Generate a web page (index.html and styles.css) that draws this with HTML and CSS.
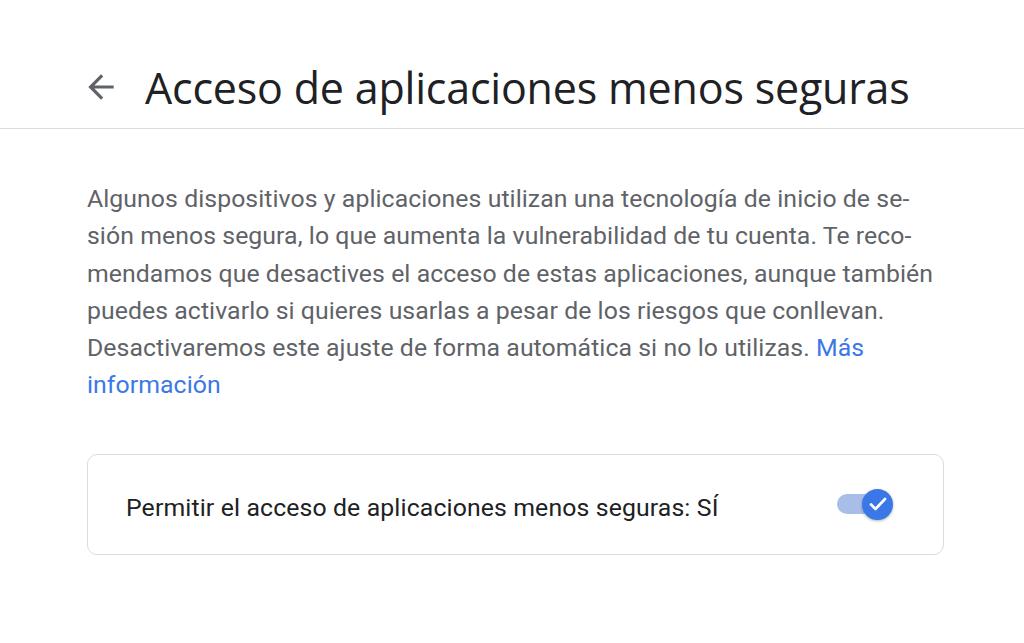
FILE: index.html
```html
<!DOCTYPE html>
<html lang="es">
<head>
    <meta charset="UTF-8">
    <meta name="viewport" content="width=device-width, initial-scale=1.0">
    <title>Acceso de aplicaciones menos seguras</title>
    <link rel="stylesheet" href="styles.css">
</head>
<body>
    <header class="page-header">
        <a class="back-btn" href="#" aria-label="Atrás">
            <svg width="38" height="38" viewBox="0 0 24 24">
                <path d="M20 11H7.83l5.59-5.59L12 4l-8 8 8 8 1.41-1.41L7.83 13H20v-2z" fill="#5f6368"/>
            </svg>
        </a>
        <h1>Acceso de aplicaciones menos seguras</h1>
    </header>

    <main class="content">
        <p class="intro">
            Algunos dispositivos y aplicaciones utilizan una tecnología de inicio de se-<br>
            sión menos segura, lo que aumenta la vulnerabilidad de tu cuenta. Te reco-<br>
            mendamos que desactives el acceso de estas aplicaciones, aunque también<br>
            puedes activarlo si quieres usarlas a pesar de los riesgos que conllevan.<br>
            Desactivaremos este ajuste de forma automática si no lo utilizas. <a href="#">Más<br>
            información</a>
        </p>

        <div class="setting-card">
            <span class="setting-label">Permitir el acceso de aplicaciones menos seguras: SÍ</span>
            <div class="toggle">
                <div class="toggle-track"></div>
                <div class="toggle-knob">
                    <svg width="24" height="24" viewBox="0 0 24 24">
                        <path d="M5 12.5l4.5 4.5L19 7" fill="none" stroke="#fff" stroke-width="2.6" stroke-linecap="round" stroke-linejoin="round"/>
                    </svg>
                </div>
            </div>
        </div>
    </main>
</body>
</html>
```

FILE: styles.css
```css
body {
    margin: 0;
    font-family: 'Roboto', 'Liberation Sans', sans-serif;
    background: #fff;
    color: #202124;
}

.page-header {
    display: flex;
    align-items: center;
    height: 129px;
    padding: 46px 0 0 82px;
    border-bottom: 1px solid #dadce0;
    box-sizing: border-box;
}

.back-btn {
    display: flex;
    width: 38px;
    height: 38px;
    margin-right: 25px;
}

.page-header h1 {
    margin: 0;
    font-family: 'Open Sans', 'Roboto', sans-serif;
    font-weight: 400;
    font-size: 43px;
    color: #202124;
    letter-spacing: -0.2px;
}

.content {
    padding: 51px 0 0 87px;
    width: 900px;
}

.intro {
    margin: 0;
    font-size: 24.8px;
    line-height: 37.3px;
    color: #5f6368;
    letter-spacing: 0.07px;
    white-space: nowrap;
}

.intro a {
    color: #3b78e7;
    text-decoration: none;
}

.setting-card {
    display: flex;
    align-items: center;
    justify-content: space-between;
    margin-top: 50px;
    width: 857px;
    height: 101px;
    box-sizing: border-box;
    border: 1px solid #dadce0;
    border-radius: 10px;
    padding: 0 50px 0 38px;
}

.setting-label {
    font-size: 24.8px;
    color: #202124;
    letter-spacing: 0.13px;
    padding-top: 6px;
}

.toggle {
    position: relative;
    width: 56px;
    height: 31px;
}

.toggle-track {
    position: absolute;
    left: 0;
    top: 5px;
    width: 42px;
    height: 20px;
    border-radius: 10px;
    background: #a8bde8;
}

.toggle-knob {
    position: absolute;
    right: 0;
    top: 0;
    width: 31px;
    height: 31px;
    border-radius: 50%;
    background: #3b78e7;
    box-shadow: 0 1px 3px rgba(0, 0, 0, 0.3);
    display: flex;
    align-items: center;
    justify-content: center;
}
```
